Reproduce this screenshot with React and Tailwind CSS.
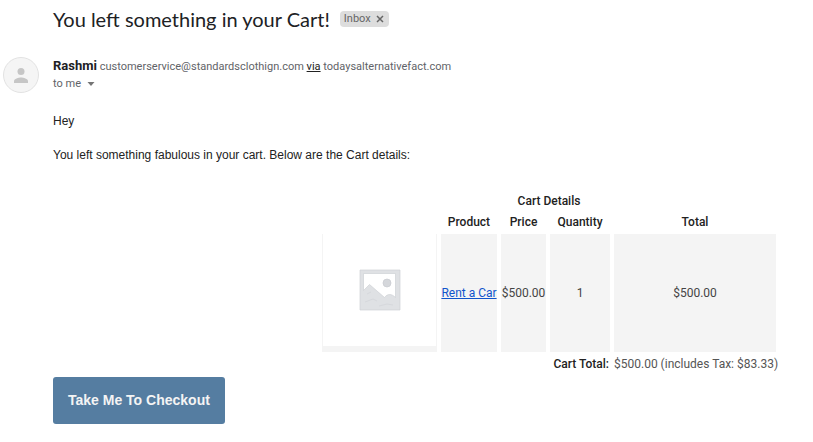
const items = [
  { name: 'Rent a Car', price: '$500.00', quantity: 1, total: '$500.00' },
];

function Avatar() {
  return (
    <svg viewBox="0 0 36 36" className="w-9 h-9" aria-hidden="true">
      <circle cx="18" cy="18" r="17.5" fill="#f5f5f5" stroke="#e2e2e2" />
      <circle cx="18" cy="14.5" r="3.5" fill="#c6c6c6" />
      <path d="M11 26v-1.8c0-2.4 4.6-3.7 7-3.7s7 1.3 7 3.7V26z" fill="#c6c6c6" />
    </svg>
  );
}

function Placeholder() {
  return (
    <svg viewBox="0 0 42 42" className="w-[42px] h-[42px]" role="img" aria-label="Product">
      <path
        fillRule="evenodd"
        d="M1 1h40v40H1zM4.500 4.500v17l6-6 15 13c3-4 7-4 11 0V4.500z"
        fill="#dfe1e4"
        stroke="#cfd1d5"
        strokeWidth="0.7"
      />
      <circle cx="28" cy="14" r="4" fill="#d5d7db" stroke="#c9cbd0" strokeWidth="0.7" />
      <path d="M6 33l8-3 4 2M20 37l8-2 6 1M8 25l4-2" fill="none" stroke="#d6d8dc" />
    </svg>
  );
}

function Header() {
  return (
    <header className="flex items-center gap-[10px] pt-[7px] pl-[53px]">
      <h1 className="font-['Lato','Open_Sans',sans-serif] text-[20px] leading-6 text-[#202124]">
        You left something in your Cart!
      </h1>
      <span className="flex items-center gap-1 h-4 px-1 rounded bg-[#ddd] text-[11px] leading-4 text-[#666]">
        Inbox
        <button type="button" aria-label="Remove label Inbox" className="px-px">
          <svg viewBox="0 0 8 8" className="w-2 h-2">
            <path d="M1 1l6 6M7 1l-6 6" stroke="#666" strokeWidth="1.5" />
          </svg>
        </button>
      </span>
    </header>
  );
}

function Sender() {
  return (
    <section className="flex gap-[14px] mt-[26px] pl-[3px]">
      <Avatar />
      <div className="text-[11px] leading-[17px] text-[#5f6368]">
        <p>
          <span className="text-[13px] font-bold text-[#202124]">Rashmi</span>{' '}
          <span>customerservice@standardsclothign.com</span>{' '}
          <a href="#via" className="text-[#222] underline">via</a>{' '}
          <span>todaysalternativefact.com</span>
        </p>
        <button type="button" className="flex items-center gap-[6px]">
          to me
          <svg viewBox="0 0 8 4" className="w-2 h-1" aria-hidden="true">
            <path d="M0.5 0h7L4 4z" fill="#757575" />
          </svg>
        </button>
      </div>
    </section>
  );
}

function CartTable() {
  return (
    <table className="ml-auto mr-[33px] mt-[25px] border-separate border-spacing-1 text-center">
      <caption className="font-medium leading-[17px] pt-1">Cart Details</caption>
      <thead>
        <tr className="leading-4">
          <td className="w-[115px]"></td>
          <th className="w-14 font-medium">Product</th>
          <th className="w-[45px] font-medium">Price</th>
          <th className="w-[60px] font-medium">Quantity</th>
          <th className="w-[162px] font-medium">Total</th>
        </tr>
      </thead>
      <tbody>
        {items.map((item) => (
          <tr key={item.name} className="text-[#444]">
            <td className="bg-[#f4f4f4] px-px pb-[6px]">
              <div className="flex items-center justify-center h-28 bg-white">
                <Placeholder />
              </div>
            </td>
            <td className="bg-[#f4f4f4] whitespace-nowrap">
              <a href="#product" className="text-[#1155cc] underline">{item.name}</a>
            </td>
            <td className="bg-[#f4f4f4]">{item.price}</td>
            <td className="bg-[#f4f4f4]">{item.quantity}</td>
            <td className="bg-[#f4f4f4]">{item.total}</td>
          </tr>
        ))}
      </tbody>
      <tfoot>
        <tr className="leading-[17px]">
          <th colSpan={4} className="pr-px text-right font-medium">Cart Total:</th>
          <td className="max-w-[162px] whitespace-nowrap text-left text-[#555]">
            $500.00 (includes Tax: $83.33)
          </td>
        </tr>
      </tfoot>
    </table>
  );
}

export default function App() {
  return (
    <main className="bg-white pb-4 font-['Roboto',sans-serif] text-[12px] text-[#222]">
      <Header />
      <Sender />
      <div className="pt-5 leading-[17px]">
        <div className="pl-[53px] font-['Liberation_Sans',sans-serif]">
          <p>Hey</p>
          <p className="mt-[17px]">You left something fabulous in your cart. Below are the Cart details:</p>
        </div>
        <CartTable />
        <button
          type="button"
          className="ml-[53px] h-[47px] px-[15px] rounded-[3px] bg-[#557da1] font-['Liberation_Sans',sans-serif] text-[14px] font-bold text-[#f4f4f4]"
        >
          Take Me To Checkout
        </button>
      </div>
    </main>
  );
}
